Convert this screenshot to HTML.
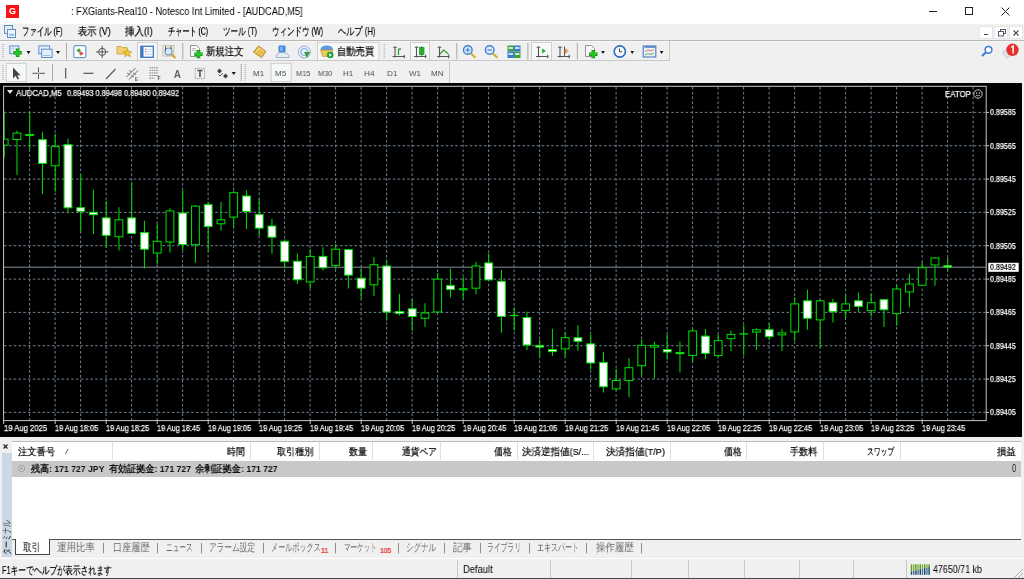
<!DOCTYPE html>
<html><head><meta charset="utf-8">
<style>
*{margin:0;padding:0;box-sizing:border-box}
html,body{width:1024px;height:579px;overflow:hidden;background:#f0f0f0;font-family:"Liberation Sans",sans-serif;color:#000}
.a{position:absolute;white-space:nowrap}
.t{transform-origin:0 50%;will-change:transform}
.ch{position:absolute;left:0;top:0}
.sep{position:absolute;width:1px;background:#e0e0e0}
</style></head><body>
<div class="a" style="left:0;top:0;width:1024px;height:23.5px;background:#fff"></div>
<div class="a" style="left:6px;top:5px;width:13px;height:12.5px;background:#f81414;color:#fff;font-size:9px;font-weight:bold;text-align:center;line-height:12.5px">G</div>
<div class="a" style="left:929px;top:11px;width:8px;height:1px;background:#222"></div>
<div class="a" style="left:965px;top:7px;width:8px;height:8px;border:1px solid #222"></div>
<svg class="a" style="left:1001px;top:6.5px" width="9" height="9"><path d="M0.5,0.5L8.5,8.5M8.5,0.5L0.5,8.5" stroke="#222" stroke-width="1"/></svg>

<svg class="a" style="left:4px;top:24.5px" width="12" height="13"><rect x="0.5" y="0.5" width="8" height="8" fill="#e6eef8" stroke="#5b8ecb"/><rect x="3.5" y="4.5" width="8" height="8" fill="#f2f6fb" stroke="#5b8ecb"/><path d="M5,8.5l1.3,2.5l1.3,-2.5l1.3,2.5l1.3,-2.5" stroke="#5b8ecb" fill="none" stroke-width="0.7"/></svg>
<div class="a" style="left:979px;top:25.5px;width:13.5px;height:13px;background:#fff;border:1px solid #e6e6e6"></div>
<div class="a" style="left:994px;top:25.5px;width:13.5px;height:13px;background:#fff;border:1px solid #e6e6e6"></div>
<div class="a" style="left:1009px;top:25.5px;width:13.5px;height:13px;background:#fff;border:1px solid #e6e6e6"></div>
<div class="a" style="left:983.5px;top:33.5px;width:4px;height:1.3px;background:#3c4a5a"></div>
<svg class="a" style="left:997.5px;top:28.5px" width="8" height="8"><rect x="2.5" y="0.5" width="5" height="4" fill="none" stroke="#3c4a5a" stroke-width="0.9"/><rect x="0.5" y="2.5" width="5" height="4.5" fill="#fff" stroke="#3c4a5a" stroke-width="0.9"/></svg>
<svg class="a" style="left:1013px;top:30px" width="6" height="6"><path d="M0.5,0.5L5.5,5.5M5.5,0.5L0.5,5.5" stroke="#3c4a5a" stroke-width="1.2"/></svg>
<div class="a" style="left:0;top:40px;width:1024px;height:1px;background:#b8b8b8"></div><div class="a" style="left:0;top:41px;width:1024px;height:1px;background:#f8f8f8"></div>

<div class="a" style="left:0;top:41px;width:670px;height:20px;border-right:1px solid #c8c8c8;border-bottom:1px solid #c8c8c8"></div>

<div class="a" style="left:0;top:62px;width:450px;height:21px;border-right:1px solid #c8c8c8"></div>
<svg class="a" style="left:0;top:40px;will-change:transform" width="1024" height="44" viewBox="0 40 1024 44">
<!-- gripper tb1 -->
<path d="M3,44V58.5M3,65V80.5M245.3,64V80.5M384.3,44V58.5" stroke="#b8b8b8" stroke-width="1.6" stroke-dasharray="1 1"/>
<!-- new chart -->
<rect x="9.8" y="45.9" width="9" height="7.8" fill="#e6eef8" stroke="#5d8fd0"/>
<path d="M11.5,48.2h3M11.5,50h1" stroke="#8fb0d8" stroke-width="0.8"/>
<path d="M17.6,48.5V57M13.4,52.7H21.8" stroke="#1a8a1a" stroke-width="3.6"/>
<path d="M17.6,49.2V56.3M14.1,52.7H21.1" stroke="#22cc22" stroke-width="2.2"/>
<path d="M26.5,51L30.5,51L28.5,54Z M56,51L60,51L58,54Z M601.2,51L604.8,51L603,54Z M630.5,51L634,51L632.2,54Z M659.8,51L663.4,51L661.6,54Z M231.7,72L235.8,72L233.7,75Z" fill="#111"/>
<!-- profiles -->
<rect x="38.8" y="45.9" width="10.8" height="7.8" fill="#e6eef8" stroke="#5d8fd0"/>
<rect x="41.6" y="49.2" width="10.5" height="8.3" fill="#e6eef8" stroke="#5d8fd0"/>
<path d="M43,55.5h7" stroke="#8fb0d8" stroke-width="0.8"/>
<!-- separators -->
<path d="M66.5,43V59.5M182.8,43V59.5M456.8,43V59.5M527.9,43V59.5M577.3,43V59.5M52.5,64V81M241.2,64V81" stroke="#a8a8a8" stroke-width="1"/>
<!-- market watch -->
<rect x="73.8" y="45.7" width="12" height="12" rx="1.5" fill="#fff" stroke="#6a9ad8" stroke-width="1.2"/>
<path d="M76.5,50.5l3,-2.5v1.5h1v2h-1v1.5z" fill="#2aa02a"/>
<path d="M83.5,53.5l-3,2.5v-1.5h-1v-2h1v-1.5z" fill="#e04040"/>
<!-- data window crosshair -->
<circle cx="102.2" cy="51.9" r="3.6" fill="none" stroke="#555" stroke-width="1"/>
<path d="M102.2,45.8V58M96,51.9H108.4" stroke="#555" stroke-width="1"/>
<!-- navigator -->
<path d="M117,46.5h4l1,1h5v6.5h-10z" fill="#f0d070" stroke="#c8a040" stroke-width="0.8"/>
<path d="M127.5,48.8l1.2,2.8l3,0.2l-2.3,2l0.8,3l-2.7,-1.7l-2.7,1.7l0.8,-3l-2.3,-2l3,-0.2z" fill="#f2c830" stroke="#b88a10" stroke-width="0.6"/>
<!-- terminal pressed -->
<rect x="137.4" y="42.3" width="19.8" height="18" fill="#f7f9f9" stroke="#c4c4c4" stroke-width="0.8"/>
<rect x="140.8" y="46.3" width="12.5" height="11" fill="#fff" stroke="#3c78c8" stroke-width="1.3"/>
<rect x="141" y="46.5" width="2.5" height="10.5" fill="#3c78c8"/>
<path d="M145,49.3h7M145,51.8h7M145,54.3h7" stroke="#b0c4e0" stroke-width="0.8"/>
<path d="M145,49.3h1M145,51.8h1" stroke="#e04040" stroke-width="1"/>
<!-- strategy tester -->
<rect x="162.8" y="45.5" width="11" height="10.5" fill="#f2f0e6" stroke="#c0b890" stroke-width="0.8"/>
<circle cx="168.5" cy="51.5" r="3.5" fill="#dbe8f8" stroke="#5a90d0" stroke-width="1.1"/>
<path d="M171,54L175.5,58" stroke="#d0a030" stroke-width="1.8"/>
<path d="M165.5,46v5M171,46v3" stroke="#444" stroke-width="0.8"/>
<!-- new order -->
<path d="M190.5,45.5h6l3,3v8h-9z" fill="#fafafa" stroke="#888" stroke-width="0.9"/>
<path d="M192,48.5h4M192,50.5h5" stroke="#999" stroke-width="0.7"/>
<path d="M198.5,50V58.2M194.3,54.2H202.6" stroke="#1a8a1a" stroke-width="3.6"/>
<path d="M198.5,50.7V57.5M195,54.2H201.9" stroke="#22cc22" stroke-width="2.2"/>
<!-- metaeditor gold -->
<path d="M253.5,52l5,-6l7.5,5.5l-4.5,6z" fill="#e8c050" stroke="#b07a20" stroke-width="0.9"/>
<path d="M255.5,52.5l4,-4.5l4.5,3.5" stroke="#f8e090" stroke-width="1" fill="none"/>
<!-- person -->
<rect x="278.5" y="45.5" width="7" height="7" rx="1" fill="#3a8ae0"/>
<path d="M280,48h3M280,50h3" stroke="#fff" stroke-width="0.7"/>
<path d="M276,57.5q0,-5 6.5,-5q6.5,0 6.5,5z" fill="#e6eef6" stroke="#8aa0b8" stroke-width="0.8"/>
<!-- signals circle -->
<circle cx="304.3" cy="52" r="6" fill="#e8f0f8" stroke="#8ab0d8" stroke-width="1"/>
<circle cx="304.3" cy="52" r="3.5" fill="none" stroke="#6a9ad0" stroke-width="0.9"/>
<path d="M304,52l3,6l3,-6" fill="#3aa040"/>
<!-- autotrading pressed -->
<rect x="317.5" y="42.3" width="61.5" height="18" fill="#f7f9f9" stroke="#c4c4c4" stroke-width="0.8"/>
<path d="M320.5,50q0,-4.5 6.5,-4.5q6,0 6,4.5z" fill="#5a9ae0"/>
<path d="M320.5,50h12.5l-2,6.5h-8.5z" fill="#e8c858" stroke="#b89030" stroke-width="0.6"/>
<circle cx="330.2" cy="55" r="3.3" fill="#1fa03a"/>
<path d="M329.2,53.3v3.4l2.6,-1.7z" fill="#fff"/>
<!-- bar chart -->
<path d="M395,46.5V57.5M393.2,47.3H396.8M392.5,56.5H405M404.2,54.8V58.2" stroke="#555" stroke-width="1.1"/>
<path d="M398.5,49v6M398.5,49h2.5" stroke="#2aa030" stroke-width="1.3"/>
<!-- candle pressed -->
<rect x="410.6" y="42.3" width="19" height="18" fill="#f7f9f9" stroke="#c4c4c4" stroke-width="0.8"/>
<path d="M416.5,46.5V57.5M414.7,47.3H418.3M414.0,56.5H426.5M425.7,54.8V58.2" stroke="#555" stroke-width="1.1"/>
<rect x="419.5" y="47.5" width="4.5" height="7" fill="#2ac030" stroke="#158a20" stroke-width="0.7"/>
<path d="M421.7,46v10" stroke="#158a20" stroke-width="0.8"/>
<!-- line chart -->
<path d="M439.5,46.5V57.5M437.7,47.3H441.3M437.0,56.5H449.5M448.7,54.8V58.2" stroke="#555" stroke-width="1.1"/>
<path d="M440,54l3.5,-4l5,4" stroke="#30a030" stroke-width="1.2" fill="none"/>
<!-- zoom in/out -->
<circle cx="467.8" cy="50" r="4.3" fill="#e0ecfa" stroke="#3a80d8" stroke-width="1.4"/>
<path d="M465.5,50h4.6M467.8,47.7v4.6" stroke="#3a80d8" stroke-width="1.2"/>
<path d="M471,53.5L475.5,57.8" stroke="#d8a830" stroke-width="2"/>
<circle cx="489.7" cy="50" r="4.3" fill="#e0ecfa" stroke="#3a80d8" stroke-width="1.4"/>
<path d="M487.4,50h4.6" stroke="#3a80d8" stroke-width="1.2"/>
<path d="M492.9,53.5L497.4,57.8" stroke="#d8a830" stroke-width="2"/>
<!-- tile -->
<rect x="507.5" y="45.5" width="6.5" height="6" fill="#3aa040"/>
<rect x="514" y="45.5" width="6.5" height="6" fill="#3a7ad0"/>
<rect x="507.5" y="51.5" width="6.5" height="6.5" fill="#3a7ad0"/>
<rect x="514" y="51.5" width="6.5" height="6.5" fill="#3aa040"/>
<path d="M508.5,48h4.5M515,48h4.5M508.5,54h4.5M515,54h4.5" stroke="#fff" stroke-width="1.4"/>
<!-- chart shift pressed -->
<rect x="531.6" y="42.3" width="19.8" height="18" fill="#f7f9f9" stroke="#c4c4c4" stroke-width="0.8"/>
<path d="M538.5,46.5V57.5M536.7,47.3H540.3M536.0,56.5H548.5M547.7,54.8V58.2" stroke="#555" stroke-width="1.1"/>
<path d="M542,48.5v5l4,-2.5z" fill="#2ab030"/>
<!-- autoscroll -->
<path d="M560,46.5V57.5M558.2,47.3H561.8M557.5,56.5H570M569.2,54.8V58.2" stroke="#555" stroke-width="1.1"/><path d="M564.5,46.5V57" stroke="#555" stroke-width="1"/>
<path d="M568.5,51h-3.5M566.5,49l-2,2l2,2" stroke="#e07020" stroke-width="1.1" fill="none"/>
<!-- indicators -->
<path d="M585.5,45.5h6l3,3v8h-9z" fill="#fafafa" stroke="#888" stroke-width="0.9"/>
<path d="M593.3,50V58.2M589.1,54.2H597.5" stroke="#1a8a1a" stroke-width="3.6"/>
<path d="M593.3,50.7V57.5M589.8,54.2H596.8" stroke="#22cc22" stroke-width="2.2"/>
<!-- clock -->
<circle cx="619.8" cy="51.5" r="5.6" fill="#f4f8fc" stroke="#2a6ac8" stroke-width="1.6"/>
<path d="M619.5,48.5v3.3h2.5" stroke="#333" stroke-width="0.9" fill="none"/>
<!-- templates -->
<rect x="643.2" y="46" width="12.6" height="11" fill="#e8f0f8" stroke="#4a7ac0" stroke-width="1.1"/>
<path d="M644.5,47h10.5" stroke="#4a7ac0" stroke-width="1.5"/>
<path d="M645,51.5l3,-1.5l3,1l3,-1.5" stroke="#e06030" stroke-width="0.8" fill="none"/>
<path d="M645,55l3,-1.5l3,1l3,-1.5" stroke="#40a040" stroke-width="0.8" fill="none"/>
<!-- search & notification -->
<circle cx="988.5" cy="49.8" r="3.4" fill="#fff" stroke="#3a7bd5" stroke-width="1.5"/>
<path d="M986,52.3L982,56" stroke="#3a7bd5" stroke-width="2"/>
<path d="M1003,51.5q5,-3 10,0q1,4 -4,5l-3,2l0.5,-2q-4,-1 -3.5,-5z" fill="#e0e4e8" stroke="#b0b8c0" stroke-width="0.6"/>
<circle cx="1012.5" cy="49.8" r="6.2" fill="#e8302a"/>
<path d="M1011.3,47.3l1.8,-1.3v7.5" stroke="#fff" stroke-width="1.5" fill="none"/>
<!-- toolbar 2 -->
<rect x="6.2" y="63.3" width="20" height="18.4" fill="#f5f8f8" stroke="#c4c4c4" stroke-width="0.8"/>
<path d="M13,67.5v11l2.6,-2.7l2,3.8l1.5,-0.8l-1.9,-3.6h3.3z" fill="#444"/>
<path d="M38.5,67.5v5M38.5,73.8v5.2M32.5,73.3H37.8M39.2,73.3H45" stroke="#555" stroke-width="1"/>
<path d="M65.7,68v10.5" stroke="#555" stroke-width="1.2"/>
<path d="M83.5,73.3h10" stroke="#555" stroke-width="1.2"/>
<path d="M106,79L115.5,69" stroke="#555" stroke-width="1.1"/>
<path d="M126.5,77l9,-9M129,79.5l9,-9" stroke="#555" stroke-width="0.9"/><path d="M127,73l3,1.5M129,70.5l3,1.5M131,75.5l3,1.5M133,73l3,1.5" stroke="#666" stroke-width="0.8"/>
<text x="135" y="80.5" font-size="4.5" font-weight="bold" fill="#555" font-family="Liberation Sans">E</text>
<path d="M149.5,67.7h9M149.5,70.3h9M149.5,72.9h9M149.5,75.5h9M149.5,78.1h5" stroke="#666" stroke-width="0.8" stroke-dasharray="1.5 0.7"/>
<text x="157.5" y="80" font-size="5" font-weight="bold" fill="#555" font-family="Liberation Sans">F</text>
<text x="173.8" y="77.8" font-size="10" font-weight="bold" fill="#666" font-family="Liberation Sans">A</text>
<rect x="195.2" y="68.3" width="9.4" height="10.3" fill="none" stroke="#777" stroke-width="0.8" stroke-dasharray="1 1"/>
<path d="M197.3,70.5h5.3M199.95,70.5v6.5" stroke="#555" stroke-width="1.6"/>
<path d="M217,71l2.5,-2.5l2.5,2.5l-2.5,2.5z M223,76l2.5,-2.5l2.5,2.5l-2.5,2.5z" fill="#444"/>
<path d="M218.5,74.5l1.5,1.5l3,-3" stroke="#444" stroke-width="0.9" fill="none"/>
<!-- M5 pressed -->
<rect x="271.1" y="63.3" width="20" height="18.4" fill="#f5f8f8" stroke="#c4c4c4" stroke-width="0.8"/>
</svg>


<div class="a" style="left:0;top:83px;width:1022px;height:354px;background:#000"></div>
<svg class="ch" width="1024" height="579" viewBox="0 0 1024 579"><defs><clipPath id="cc"><rect x="4" y="87" width="982" height="333"/></clipPath></defs><rect x="3.6" y="86.3" width="982.6" height="334.3" fill="none" stroke="#c8c8c8" stroke-width="1"/><path d="M4,112.4H986 M4,145.7H986 M4,179.1H986 M4,212.4H986 M4,245.7H986 M4,279.1H986 M4,312.4H986 M4,345.7H986 M4,379.1H986 M4,412.4H986 M29.6,87V420 M55.1,87V420 M80.6,87V420 M106.1,87V420 M131.6,87V420 M157.1,87V420 M182.6,87V420 M208.1,87V420 M233.6,87V420 M259.1,87V420 M284.6,87V420 M310.1,87V420 M335.6,87V420 M361.1,87V420 M386.6,87V420 M412.1,87V420 M437.6,87V420 M463.1,87V420 M488.6,87V420 M514.1,87V420 M539.6,87V420 M565.1,87V420 M590.6,87V420 M616.1,87V420 M641.6,87V420 M667.1,87V420 M692.6,87V420 M718.1,87V420 M743.6,87V420 M769.1,87V420 M794.6,87V420 M820.1,87V420 M845.6,87V420 M871.1,87V420 M896.6,87V420 M922.1,87V420 M947.6,87V420 M973.1,87V420" stroke="#6f8090" stroke-width="1" stroke-dasharray="2.6 2.2" fill="none"/><path d="M4,267.2H986" stroke="#8090a0" stroke-width="1"/><g clip-path="url(#cc)"><path d="M4.20,111.6V157.4 M16.95,130.4V175.1 M29.70,111.6V149.7 M42.45,131.8V193.9 M55.20,133.7V191.7 M67.95,138.7V213.2 M80.70,174.6V231.2 M93.45,189.8V233.9 M106.20,200.8V247.7 M118.95,207.2V250.5 M131.70,182.3V233.1 M144.45,220.7V268.4 M157.20,223.8V264.2 M169.95,208.3V252.4 M182.70,190.3V250.3 M195.45,205.2V262.8 M208.20,202.1V251.8 M220.95,202.1V230.5 M233.70,190.7V227.6 M246.45,190.3V229.0 M259.20,199.0V236.3 M271.95,219.0V253.8 M284.70,239.3V268.3 M297.45,253.4V283.9 M310.20,249.3V288.6 M322.95,247.2V270.4 M335.70,243.9V269.4 M348.45,248.7V288.6 M361.20,268.3V299.0 M373.95,257.0V295.9 M386.70,259.7V320.8 M399.45,293.8V315.6 M412.20,299.0V331.1 M424.95,303.2V327.0 M437.70,273.1V312.5 M450.45,268.6V297.6 M463.20,277.3V299.0 M475.95,261.7V294.3 M488.70,253.5V280.4 M501.45,270.0V332.8 M514.20,307.6V330.4 M526.95,311.7V350.0 M539.70,339.7V357.3 M552.45,328.7V355.9 M565.20,332.5V357.3 M577.95,325.2V351.1 M590.70,334.5V369.7 M603.45,352.1V392.5 M616.20,368.7V390.4 M628.95,358.3V397.3 M641.70,339.7V374.9 M654.45,341.8V378.6 M667.20,334.5V359.4 M679.95,341.8V372.4 M692.70,328.9V362.1 M705.45,328.9V359.0 M718.20,334.5V357.3 M730.95,330.4V351.1 M743.70,325.2V355.2 M756.45,328.3V350.0 M769.20,323.3V340.0 M781.95,328.7V351.1 M794.70,297.2V341.1 M807.45,289.8V329.7 M820.20,299.7V347.7 M832.95,298.7V322.5 M845.70,295.1V317.9 M858.45,292.5V311.7 M871.20,293.5V316.7 M883.95,298.7V327.0 M896.70,285.1V325.8 M909.45,273.7V307.2 M922.20,262.1V285.7 M934.95,257.4V285.7 M947.70,257.4V270.2" stroke="#00d000" stroke-width="1.1"/><rect x="0.30" y="139.2" width="7.8" height="5.9" fill="#000000" stroke="#00e000" stroke-width="1"/><rect x="13.05" y="133.1" width="7.8" height="6.4" fill="#000000" stroke="#00e000" stroke-width="1"/><rect x="25.80" y="134.5" width="7.8" height="0.9" fill="#ffffff" stroke="#00e000" stroke-width="1"/><rect x="38.55" y="139.7" width="7.8" height="23.8" fill="#ffffff" stroke="#00e000" stroke-width="1"/><rect x="51.30" y="146.6" width="7.8" height="19.2" fill="#000000" stroke="#00e000" stroke-width="1"/><rect x="64.05" y="144.7" width="7.8" height="63.1" fill="#ffffff" stroke="#00e000" stroke-width="1"/><rect x="76.80" y="207.7" width="7.8" height="3.6" fill="#ffffff" stroke="#00e000" stroke-width="1"/><rect x="89.55" y="212.3" width="7.8" height="2.4" fill="#ffffff" stroke="#00e000" stroke-width="1"/><rect x="102.30" y="217.9" width="7.8" height="17.5" fill="#ffffff" stroke="#00e000" stroke-width="1"/><rect x="115.05" y="219.8" width="7.8" height="17.0" fill="#000000" stroke="#00e000" stroke-width="1"/><rect x="127.80" y="217.9" width="7.8" height="15.5" fill="#ffffff" stroke="#00e000" stroke-width="1"/><rect x="140.55" y="232.6" width="7.8" height="16.6" fill="#ffffff" stroke="#00e000" stroke-width="1"/><rect x="153.30" y="241.3" width="7.8" height="11.7" fill="#000000" stroke="#00e000" stroke-width="1"/><rect x="166.05" y="210.9" width="7.8" height="31.1" fill="#000000" stroke="#00e000" stroke-width="1"/><rect x="178.80" y="213.0" width="7.8" height="31.5" fill="#ffffff" stroke="#00e000" stroke-width="1"/><rect x="191.55" y="206.1" width="7.8" height="38.6" fill="#000000" stroke="#00e000" stroke-width="1"/><rect x="204.30" y="204.7" width="7.8" height="21.8" fill="#ffffff" stroke="#00e000" stroke-width="1"/><rect x="217.05" y="219.8" width="7.8" height="4.0" fill="#000000" stroke="#00e000" stroke-width="1"/><rect x="229.80" y="192.7" width="7.8" height="24.4" fill="#000000" stroke="#00e000" stroke-width="1"/><rect x="242.55" y="196.0" width="7.8" height="15.5" fill="#ffffff" stroke="#00e000" stroke-width="1"/><rect x="255.30" y="214.4" width="7.8" height="13.7" fill="#ffffff" stroke="#00e000" stroke-width="1"/><rect x="268.05" y="226.0" width="7.8" height="11.2" fill="#ffffff" stroke="#00e000" stroke-width="1"/><rect x="280.80" y="241.3" width="7.8" height="20.3" fill="#ffffff" stroke="#00e000" stroke-width="1"/><rect x="293.55" y="261.2" width="7.8" height="18.6" fill="#ffffff" stroke="#00e000" stroke-width="1"/><rect x="306.30" y="256.4" width="7.8" height="25.5" fill="#000000" stroke="#00e000" stroke-width="1"/><rect x="319.05" y="256.4" width="7.8" height="11.4" fill="#ffffff" stroke="#00e000" stroke-width="1"/><rect x="331.80" y="249.2" width="7.8" height="16.2" fill="#000000" stroke="#00e000" stroke-width="1"/><rect x="344.55" y="249.6" width="7.8" height="25.5" fill="#ffffff" stroke="#00e000" stroke-width="1"/><rect x="357.30" y="278.2" width="7.8" height="9.9" fill="#ffffff" stroke="#00e000" stroke-width="1"/><rect x="370.05" y="264.7" width="7.8" height="20.1" fill="#000000" stroke="#00e000" stroke-width="1"/><rect x="382.80" y="266.0" width="7.8" height="46.0" fill="#ffffff" stroke="#00e000" stroke-width="1"/><rect x="395.55" y="311.5" width="7.8" height="1.9" fill="#ffffff" stroke="#00e000" stroke-width="1"/><rect x="408.30" y="308.8" width="7.8" height="7.7" fill="#ffffff" stroke="#00e000" stroke-width="1"/><rect x="421.05" y="313.0" width="7.8" height="5.2" fill="#000000" stroke="#00e000" stroke-width="1"/><rect x="433.80" y="279.2" width="7.8" height="32.8" fill="#000000" stroke="#00e000" stroke-width="1"/><rect x="446.55" y="285.6" width="7.8" height="4.0" fill="#ffffff" stroke="#00e000" stroke-width="1"/><rect x="459.30" y="288.7" width="7.8" height="1.1" fill="#000000" stroke="#00e000" stroke-width="1"/><rect x="472.05" y="266.0" width="7.8" height="22.2" fill="#000000" stroke="#00e000" stroke-width="1"/><rect x="484.80" y="262.9" width="7.8" height="17.0" fill="#ffffff" stroke="#00e000" stroke-width="1"/><rect x="497.55" y="281.3" width="7.8" height="35.2" fill="#ffffff" stroke="#00e000" stroke-width="1"/><path d="M509.80,315.5H518.60" stroke="#00e000" stroke-width="1.3"/><rect x="523.05" y="317.5" width="7.8" height="27.5" fill="#ffffff" stroke="#00e000" stroke-width="1"/><rect x="535.80" y="345.4" width="7.8" height="1.7" fill="#ffffff" stroke="#00e000" stroke-width="1"/><rect x="548.55" y="349.5" width="7.8" height="2.1" fill="#ffffff" stroke="#00e000" stroke-width="1"/><rect x="561.30" y="337.7" width="7.8" height="11.2" fill="#000000" stroke="#00e000" stroke-width="1"/><rect x="574.05" y="337.7" width="7.8" height="3.6" fill="#ffffff" stroke="#00e000" stroke-width="1"/><rect x="586.80" y="343.9" width="7.8" height="19.1" fill="#ffffff" stroke="#00e000" stroke-width="1"/><rect x="599.55" y="362.4" width="7.8" height="24.4" fill="#ffffff" stroke="#00e000" stroke-width="1"/><rect x="612.30" y="380.5" width="7.8" height="8.4" fill="#000000" stroke="#00e000" stroke-width="1"/><rect x="625.05" y="367.7" width="7.8" height="12.9" fill="#000000" stroke="#00e000" stroke-width="1"/><rect x="637.80" y="345.4" width="7.8" height="20.3" fill="#000000" stroke="#00e000" stroke-width="1"/><rect x="650.55" y="345.4" width="7.8" height="1.7" fill="#000000" stroke="#00e000" stroke-width="1"/><rect x="663.30" y="349.5" width="7.8" height="2.5" fill="#ffffff" stroke="#00e000" stroke-width="1"/><rect x="676.05" y="352.6" width="7.8" height="1.1" fill="#ffffff" stroke="#00e000" stroke-width="1"/><rect x="688.80" y="330.9" width="7.8" height="24.5" fill="#000000" stroke="#00e000" stroke-width="1"/><rect x="701.55" y="336.1" width="7.8" height="17.2" fill="#ffffff" stroke="#00e000" stroke-width="1"/><rect x="714.30" y="340.6" width="7.8" height="14.8" fill="#000000" stroke="#00e000" stroke-width="1"/><rect x="727.05" y="334.4" width="7.8" height="4.2" fill="#000000" stroke="#00e000" stroke-width="1"/><path d="M739.30,333.9H748.10" stroke="#00e000" stroke-width="1.3"/><rect x="752.55" y="329.8" width="7.8" height="2.2" fill="#000000" stroke="#00e000" stroke-width="1"/><rect x="765.30" y="329.7" width="7.8" height="6.9" fill="#ffffff" stroke="#00e000" stroke-width="1"/><rect x="778.05" y="332.9" width="7.8" height="1.9" fill="#000000" stroke="#00e000" stroke-width="1"/><rect x="790.80" y="303.9" width="7.8" height="28.0" fill="#000000" stroke="#00e000" stroke-width="1"/><rect x="803.55" y="300.8" width="7.8" height="17.5" fill="#ffffff" stroke="#00e000" stroke-width="1"/><rect x="816.30" y="300.8" width="7.8" height="19.1" fill="#000000" stroke="#00e000" stroke-width="1"/><rect x="829.05" y="302.7" width="7.8" height="8.9" fill="#ffffff" stroke="#00e000" stroke-width="1"/><rect x="841.80" y="303.9" width="7.8" height="6.7" fill="#000000" stroke="#00e000" stroke-width="1"/><rect x="854.55" y="300.8" width="7.8" height="5.6" fill="#ffffff" stroke="#00e000" stroke-width="1"/><rect x="867.30" y="302.7" width="7.8" height="7.9" fill="#000000" stroke="#00e000" stroke-width="1"/><rect x="880.05" y="299.6" width="7.8" height="10.2" fill="#ffffff" stroke="#00e000" stroke-width="1"/><rect x="892.80" y="289.0" width="7.8" height="24.6" fill="#000000" stroke="#00e000" stroke-width="1"/><rect x="905.55" y="284.0" width="7.8" height="7.9" fill="#000000" stroke="#00e000" stroke-width="1"/><rect x="918.30" y="267.7" width="7.8" height="17.5" fill="#000000" stroke="#00e000" stroke-width="1"/><rect x="931.05" y="257.9" width="7.8" height="7.1" fill="#000000" stroke="#00e000" stroke-width="1"/><rect x="943.80" y="265.7" width="7.8" height="1.4" fill="#ffffff" stroke="#00e000" stroke-width="1"/></g><path d="M986,112.4H989" stroke="#c8c8c8"/><path d="M986,145.7H989" stroke="#c8c8c8"/><path d="M986,179.1H989" stroke="#c8c8c8"/><path d="M986,212.4H989" stroke="#c8c8c8"/><path d="M986,245.7H989" stroke="#c8c8c8"/><path d="M986,279.1H989" stroke="#c8c8c8"/><path d="M986,312.4H989" stroke="#c8c8c8"/><path d="M986,345.7H989" stroke="#c8c8c8"/><path d="M986,379.1H989" stroke="#c8c8c8"/><path d="M986,412.4H989" stroke="#c8c8c8"/><rect x="988.3" y="262.8" width="30.4" height="9" fill="#ffffff"/><path d="M3.6,420.5V424" stroke="#c8c8c8"/><path d="M55.2,420.5V424" stroke="#c8c8c8"/><path d="M106.2,420.5V424" stroke="#c8c8c8"/><path d="M157.2,420.5V424" stroke="#c8c8c8"/><path d="M208.2,420.5V424" stroke="#c8c8c8"/><path d="M259.2,420.5V424" stroke="#c8c8c8"/><path d="M310.2,420.5V424" stroke="#c8c8c8"/><path d="M361.2,420.5V424" stroke="#c8c8c8"/><path d="M412.2,420.5V424" stroke="#c8c8c8"/><path d="M463.2,420.5V424" stroke="#c8c8c8"/><path d="M514.2,420.5V424" stroke="#c8c8c8"/><path d="M565.2,420.5V424" stroke="#c8c8c8"/><path d="M616.2,420.5V424" stroke="#c8c8c8"/><path d="M667.2,420.5V424" stroke="#c8c8c8"/><path d="M718.2,420.5V424" stroke="#c8c8c8"/><path d="M769.2,420.5V424" stroke="#c8c8c8"/><path d="M820.2,420.5V424" stroke="#c8c8c8"/><path d="M871.2,420.5V424" stroke="#c8c8c8"/><path d="M922.2,420.5V424" stroke="#c8c8c8"/></svg>
<div class="a" style="left:7px;top:90px;width:0;height:0;border-left:3px solid transparent;border-right:3px solid transparent;border-top:4px solid #e8e8e8"></div>
<svg class="a" style="left:973px;top:89px" width="10" height="10"><circle cx="5" cy="5" r="4.2" fill="none" stroke="#ddd" stroke-width="0.9"/><circle cx="3.6" cy="4" r="0.7" fill="#ddd"/><circle cx="6.4" cy="4" r="0.7" fill="#ddd"/><path d="M3,6Q5,8 7,6" stroke="#ddd" fill="none" stroke-width="0.8"/></svg>

<div class="a" style="left:0;top:437px;width:1024px;height:4px;background:#f0f0f0"></div>
<svg class="a" style="left:3px;top:443.5px" width="5" height="5"><path d="M0.5,0.5L4.5,4.5M4.5,0.5L0.5,4.5" stroke="#222" stroke-width="1.2"/></svg>
<div class="a" style="left:1.5px;top:453px;width:10px;height:103.5px;background:#cbd8e6"></div>
<div class="a" style="left:1.5px;top:555px;font-size:9.5px;line-height:10px;color:#222;transform:rotate(-90deg) scaleX(0.7);transform-origin:0 0;will-change:transform">ターミナル</div>
<div class="a" style="left:12px;top:441px;width:1009px;height:98px;background:#fff;border-top:1px solid #bcbcbc"></div>
<div class="a" style="left:12px;top:461px;width:1009px;height:15.5px;background:#c8c8c8"></div>
<div class="sep" style="left:112px;top:442px;height:18px"></div>
<div class="sep" style="left:250px;top:442px;height:18px"></div>
<div class="sep" style="left:319px;top:442px;height:18px"></div>
<div class="sep" style="left:372px;top:442px;height:18px"></div>
<div class="sep" style="left:440px;top:442px;height:18px"></div>
<div class="sep" style="left:517px;top:442px;height:18px"></div>
<div class="sep" style="left:593px;top:442px;height:18px"></div>
<div class="sep" style="left:670px;top:442px;height:18px"></div>
<div class="sep" style="left:746px;top:442px;height:18px"></div>
<div class="sep" style="left:823px;top:442px;height:18px"></div>
<div class="sep" style="left:900px;top:442px;height:18px"></div>
<svg class="a" style="left:18px;top:465px" width="7" height="7"><circle cx="3.5" cy="3.5" r="3" fill="#d8d8d8" stroke="#888" stroke-width="0.8"/><circle cx="3.5" cy="3.5" r="1.2" fill="#999"/></svg>

<div class="a" style="left:12px;top:539px;width:1009px;height:1px;background:#555"></div>
<div class="a" style="left:14.5px;top:539px;width:35px;height:16px;background:#fff;border:1px solid #444;border-top:none"></div>

<div class="a" style="left:0;top:558px;width:1024px;height:1px;background:#fff"></div>
<div class="sep" style="left:457px;top:560px;height:18px;background:#c8c8c8"></div>
<div class="sep" style="left:550px;top:560px;height:18px;background:#c8c8c8"></div>
<div class="sep" style="left:631px;top:560px;height:18px;background:#c8c8c8"></div>
<div class="sep" style="left:688px;top:560px;height:18px;background:#c8c8c8"></div>
<div class="sep" style="left:744px;top:560px;height:18px;background:#c8c8c8"></div>
<div class="sep" style="left:799px;top:560px;height:18px;background:#c8c8c8"></div>
<div class="sep" style="left:853px;top:560px;height:18px;background:#c8c8c8"></div>
<div class="sep" style="left:906px;top:560px;height:18px;background:#c8c8c8"></div>
<svg class="a" style="left:910px;top:564px" width="20" height="11"><rect x="0.80" y="0.3" width="1.4" height="7.20" fill="#5a9a1a"/><rect x="0.80" y="7.50" width="1.4" height="3.30" fill="#0a4a6a"/><rect x="3.00" y="0.3" width="1.4" height="6.65" fill="#7ab040"/><rect x="3.00" y="6.95" width="1.4" height="3.85" fill="#4a7090"/><rect x="5.20" y="0.3" width="1.4" height="6.10" fill="#5a9a1a"/><rect x="5.20" y="6.40" width="1.4" height="4.40" fill="#0a4a6a"/><rect x="7.40" y="0.3" width="1.4" height="5.55" fill="#7ab040"/><rect x="7.40" y="5.85" width="1.4" height="4.95" fill="#4a7090"/><rect x="9.60" y="0.3" width="1.4" height="5.00" fill="#5a9a1a"/><rect x="9.60" y="5.30" width="1.4" height="5.50" fill="#0a4a6a"/><rect x="11.80" y="0.3" width="1.4" height="4.45" fill="#7ab040"/><rect x="11.80" y="4.75" width="1.4" height="6.05" fill="#4a7090"/><rect x="14.00" y="0.3" width="1.4" height="3.90" fill="#5a9a1a"/><rect x="14.00" y="4.20" width="1.4" height="6.60" fill="#0a4a6a"/><rect x="16.20" y="0.3" width="1.4" height="3.35" fill="#7ab040"/><rect x="16.20" y="3.65" width="1.4" height="7.15" fill="#4a7090"/><rect x="18.40" y="0.3" width="1.4" height="2.80" fill="#5a9a1a"/><rect x="18.40" y="3.10" width="1.4" height="7.70" fill="#0a4a6a"/></svg><svg class="a" style="left:1010px;top:566px" width="14" height="13"><path d="M13,3L3,13M13,7L7,13M13,11L11,13" stroke="#b0b0b0" stroke-width="1"/></svg>
<div class="a" style="left:0;top:578px;width:1024px;height:1px;background:#3a4a5a"></div>
<div class="a t" style="left:71.0px;top:6.7px;font-size:10px;line-height:10px;color:#000;transform:scaleX(0.926)">: FXGiants-Real10 - Notesco Int Limited - [AUDCAD,M5]</div>
<div class="a t" style="left:22.0px;top:26.3px;font-size:10.5px;line-height:10.5px;color:#000;transform:scaleX(0.671);-webkit-text-stroke:0.2px #000">ファイル (F)</div>
<div class="a t" style="left:77.5px;top:26.3px;font-size:10.5px;line-height:10.5px;color:#000;transform:scaleX(0.835);-webkit-text-stroke:0.2px #000">表示 (V)</div>
<div class="a t" style="left:125.0px;top:26.3px;font-size:10.5px;line-height:10.5px;color:#000;transform:scaleX(0.861);-webkit-text-stroke:0.2px #000">挿入(I)</div>
<div class="a t" style="left:167.5px;top:26.3px;font-size:10.5px;line-height:10.5px;color:#000;transform:scaleX(0.650);-webkit-text-stroke:0.2px #000">チャート (C)</div>
<div class="a t" style="left:222.5px;top:26.3px;font-size:10.5px;line-height:10.5px;color:#000;transform:scaleX(0.689);-webkit-text-stroke:0.2px #000">ツール (T)</div>
<div class="a t" style="left:271.5px;top:26.3px;font-size:10.5px;line-height:10.5px;color:#000;transform:scaleX(0.682);-webkit-text-stroke:0.2px #000">ウィンドウ (W)</div>
<div class="a t" style="left:337.5px;top:26.3px;font-size:10.5px;line-height:10.5px;color:#000;transform:scaleX(0.743);-webkit-text-stroke:0.2px #000">ヘルプ (H)</div>
<div class="a t" style="left:206.0px;top:45.6px;font-size:10.5px;line-height:10.5px;color:#000;transform:scaleX(0.852);-webkit-text-stroke:0.2px #000">新規注文</div>
<div class="a t" style="left:337.2px;top:45.6px;font-size:10.5px;line-height:10.5px;color:#000;transform:scaleX(0.843);-webkit-text-stroke:0.2px #000">自動売買</div>
<div class="a t" style="left:252.5px;top:70.0px;font-size:8px;line-height:8px;color:#505050;transform:scaleX(0.989)">M1</div>
<div class="a t" style="left:275.0px;top:70.0px;font-size:8px;line-height:8px;color:#505050;transform:scaleX(0.989)">M5</div>
<div class="a t" style="left:295.8px;top:70.0px;font-size:8px;line-height:8px;color:#505050;transform:scaleX(0.925)">M15</div>
<div class="a t" style="left:318.3px;top:70.0px;font-size:8px;line-height:8px;color:#505050;transform:scaleX(0.925)">M30</div>
<div class="a t" style="left:342.5px;top:70.0px;font-size:8px;line-height:8px;color:#505050;transform:scaleX(0.977)">H1</div>
<div class="a t" style="left:364.1px;top:70.0px;font-size:8px;line-height:8px;color:#505050;transform:scaleX(1.026)">H4</div>
<div class="a t" style="left:386.9px;top:70.0px;font-size:8px;line-height:8px;color:#505050;transform:scaleX(1.026)">D1</div>
<div class="a t" style="left:409.3px;top:70.0px;font-size:8px;line-height:8px;color:#505050;transform:scaleX(1.000)">W1</div>
<div class="a t" style="left:430.6px;top:70.0px;font-size:8px;line-height:8px;color:#505050;transform:scaleX(0.964)">MN</div>
<div class="a t" style="left:16.0px;top:88.6px;font-size:8.5px;line-height:8.5px;color:#f4f4f4;transform:scaleX(0.913);-webkit-text-stroke:0.25px #f4f4f4">AUDCAD,M5</div>
<div class="a t" style="left:66.8px;top:88.6px;font-size:8.5px;line-height:8.5px;color:#f4f4f4;transform:scaleX(0.862);-webkit-text-stroke:0.25px #f4f4f4">0.89493 0.89498 0.89490 0.89492</div>
<div class="a t" style="left:944.7px;top:89.6px;font-size:8.5px;line-height:8.5px;color:#f4f4f4;transform:scaleX(0.924);-webkit-text-stroke:0.25px #f4f4f4">EATOP</div>
<div class="a t" style="left:990.3px;top:108.4px;font-size:8.8px;line-height:8.8px;color:#fafafa;transform:scaleX(0.808);-webkit-text-stroke:0.25px #fafafa">0.89585</div>
<div class="a t" style="left:990.3px;top:141.7px;font-size:8.8px;line-height:8.8px;color:#fafafa;transform:scaleX(0.808);-webkit-text-stroke:0.25px #fafafa">0.89565</div>
<div class="a t" style="left:990.3px;top:175.1px;font-size:8.8px;line-height:8.8px;color:#fafafa;transform:scaleX(0.808);-webkit-text-stroke:0.25px #fafafa">0.89545</div>
<div class="a t" style="left:990.3px;top:208.4px;font-size:8.8px;line-height:8.8px;color:#fafafa;transform:scaleX(0.808);-webkit-text-stroke:0.25px #fafafa">0.89525</div>
<div class="a t" style="left:990.3px;top:241.7px;font-size:8.8px;line-height:8.8px;color:#fafafa;transform:scaleX(0.808);-webkit-text-stroke:0.25px #fafafa">0.89505</div>
<div class="a t" style="left:990.3px;top:275.1px;font-size:8.8px;line-height:8.8px;color:#fafafa;transform:scaleX(0.808);-webkit-text-stroke:0.25px #fafafa">0.89485</div>
<div class="a t" style="left:990.3px;top:308.4px;font-size:8.8px;line-height:8.8px;color:#fafafa;transform:scaleX(0.808);-webkit-text-stroke:0.25px #fafafa">0.89465</div>
<div class="a t" style="left:990.3px;top:341.7px;font-size:8.8px;line-height:8.8px;color:#fafafa;transform:scaleX(0.808);-webkit-text-stroke:0.25px #fafafa">0.89445</div>
<div class="a t" style="left:990.3px;top:375.1px;font-size:8.8px;line-height:8.8px;color:#fafafa;transform:scaleX(0.808);-webkit-text-stroke:0.25px #fafafa">0.89425</div>
<div class="a t" style="left:990.3px;top:408.4px;font-size:8.8px;line-height:8.8px;color:#fafafa;transform:scaleX(0.808);-webkit-text-stroke:0.25px #fafafa">0.89405</div>
<div class="a t" style="left:990.3px;top:262.7px;font-size:8.8px;line-height:8.8px;color:#000;transform:scaleX(0.808);-webkit-text-stroke:0.2px #000">0.89492</div>
<div class="a t" style="left:4.0px;top:423.9px;font-size:8.8px;line-height:8.8px;color:#fafafa;transform:scaleX(0.874);-webkit-text-stroke:0.25px #fafafa">19 Aug 2025</div>
<div class="a t" style="left:55.4px;top:423.9px;font-size:8.8px;line-height:8.8px;color:#fafafa;transform:scaleX(0.833);-webkit-text-stroke:0.25px #fafafa">19 Aug 18:05</div>
<div class="a t" style="left:106.4px;top:423.9px;font-size:8.8px;line-height:8.8px;color:#fafafa;transform:scaleX(0.833);-webkit-text-stroke:0.25px #fafafa">19 Aug 18:25</div>
<div class="a t" style="left:157.4px;top:423.9px;font-size:8.8px;line-height:8.8px;color:#fafafa;transform:scaleX(0.833);-webkit-text-stroke:0.25px #fafafa">19 Aug 18:45</div>
<div class="a t" style="left:208.4px;top:423.9px;font-size:8.8px;line-height:8.8px;color:#fafafa;transform:scaleX(0.833);-webkit-text-stroke:0.25px #fafafa">19 Aug 19:05</div>
<div class="a t" style="left:259.4px;top:423.9px;font-size:8.8px;line-height:8.8px;color:#fafafa;transform:scaleX(0.833);-webkit-text-stroke:0.25px #fafafa">19 Aug 19:25</div>
<div class="a t" style="left:310.4px;top:423.9px;font-size:8.8px;line-height:8.8px;color:#fafafa;transform:scaleX(0.833);-webkit-text-stroke:0.25px #fafafa">19 Aug 19:45</div>
<div class="a t" style="left:361.4px;top:423.9px;font-size:8.8px;line-height:8.8px;color:#fafafa;transform:scaleX(0.833);-webkit-text-stroke:0.25px #fafafa">19 Aug 20:05</div>
<div class="a t" style="left:412.4px;top:423.9px;font-size:8.8px;line-height:8.8px;color:#fafafa;transform:scaleX(0.833);-webkit-text-stroke:0.25px #fafafa">19 Aug 20:25</div>
<div class="a t" style="left:463.4px;top:423.9px;font-size:8.8px;line-height:8.8px;color:#fafafa;transform:scaleX(0.833);-webkit-text-stroke:0.25px #fafafa">19 Aug 20:45</div>
<div class="a t" style="left:514.4px;top:423.9px;font-size:8.8px;line-height:8.8px;color:#fafafa;transform:scaleX(0.833);-webkit-text-stroke:0.25px #fafafa">19 Aug 21:05</div>
<div class="a t" style="left:565.4px;top:423.9px;font-size:8.8px;line-height:8.8px;color:#fafafa;transform:scaleX(0.833);-webkit-text-stroke:0.25px #fafafa">19 Aug 21:25</div>
<div class="a t" style="left:616.4px;top:423.9px;font-size:8.8px;line-height:8.8px;color:#fafafa;transform:scaleX(0.833);-webkit-text-stroke:0.25px #fafafa">19 Aug 21:45</div>
<div class="a t" style="left:667.4px;top:423.9px;font-size:8.8px;line-height:8.8px;color:#fafafa;transform:scaleX(0.833);-webkit-text-stroke:0.25px #fafafa">19 Aug 22:05</div>
<div class="a t" style="left:718.4px;top:423.9px;font-size:8.8px;line-height:8.8px;color:#fafafa;transform:scaleX(0.833);-webkit-text-stroke:0.25px #fafafa">19 Aug 22:25</div>
<div class="a t" style="left:769.4px;top:423.9px;font-size:8.8px;line-height:8.8px;color:#fafafa;transform:scaleX(0.833);-webkit-text-stroke:0.25px #fafafa">19 Aug 22:45</div>
<div class="a t" style="left:820.4px;top:423.9px;font-size:8.8px;line-height:8.8px;color:#fafafa;transform:scaleX(0.833);-webkit-text-stroke:0.25px #fafafa">19 Aug 23:05</div>
<div class="a t" style="left:871.4px;top:423.9px;font-size:8.8px;line-height:8.8px;color:#fafafa;transform:scaleX(0.833);-webkit-text-stroke:0.25px #fafafa">19 Aug 23:25</div>
<div class="a t" style="left:922.4px;top:423.9px;font-size:8.8px;line-height:8.8px;color:#fafafa;transform:scaleX(0.833);-webkit-text-stroke:0.25px #fafafa">19 Aug 23:45</div>
<div class="a t" style="left:17.6px;top:446.9px;font-size:9.5px;line-height:9.5px;color:#000;transform:scaleX(0.930);-webkit-text-stroke:0.2px #000">注文番号</div>
<div class="a t" style="left:226.8px;top:446.9px;font-size:9.5px;line-height:9.5px;color:#000;transform:scaleX(0.895);-webkit-text-stroke:0.2px #000">時間</div>
<div class="a t" style="left:276.6px;top:446.9px;font-size:9.5px;line-height:9.5px;color:#000;transform:scaleX(0.912);-webkit-text-stroke:0.2px #000">取引種別</div>
<div class="a t" style="left:348.8px;top:446.9px;font-size:9.5px;line-height:9.5px;color:#000;transform:scaleX(0.905);-webkit-text-stroke:0.2px #000">数量</div>
<div class="a t" style="left:401.8px;top:446.9px;font-size:9.5px;line-height:9.5px;color:#000;transform:scaleX(0.870);-webkit-text-stroke:0.2px #000">通貨ペア</div>
<div class="a t" style="left:494.0px;top:446.9px;font-size:9.5px;line-height:9.5px;color:#000;transform:scaleX(0.890);-webkit-text-stroke:0.2px #000">価格</div>
<div class="a t" style="left:522.0px;top:446.9px;font-size:9.5px;line-height:9.5px;color:#000;transform:scaleX(0.952);-webkit-text-stroke:0.2px #000">決済逆指値(S/...</div>
<div class="a t" style="left:606.1px;top:446.9px;font-size:9.5px;line-height:9.5px;color:#000;transform:scaleX(0.964);-webkit-text-stroke:0.2px #000">決済指値(T/P)</div>
<div class="a t" style="left:723.6px;top:446.9px;font-size:9.5px;line-height:9.5px;color:#000;transform:scaleX(0.885);-webkit-text-stroke:0.2px #000">価格</div>
<div class="a t" style="left:790.2px;top:446.9px;font-size:9.5px;line-height:9.5px;color:#000;transform:scaleX(0.910);-webkit-text-stroke:0.2px #000">手数料</div>
<div class="a t" style="left:867.1px;top:446.9px;font-size:9.5px;line-height:9.5px;color:#000;transform:scaleX(0.682);-webkit-text-stroke:0.2px #000">スワップ</div>
<div class="a t" style="left:997.0px;top:446.9px;font-size:9.5px;line-height:9.5px;color:#000;transform:scaleX(0.940);-webkit-text-stroke:0.2px #000">損益</div>
<div class="a t" style="left:64.5px;top:448.1px;font-size:8px;line-height:8px;color:#666;transform:scaleX(1.566)">/</div>
<div class="a t" style="left:30.5px;top:464.1px;font-size:9.5px;line-height:9.5px;color:#111;transform:scaleX(0.908);font-weight:bold">残高: 171 727 JPY&nbsp; 有効証拠金: 171 727&nbsp; 余剰証拠金: 171 727</div>
<div class="a t" style="left:1012.0px;top:463.9px;font-size:10px;line-height:10px;color:#111;transform:scaleX(0.719)">0</div>
<div class="a t" style="left:23.2px;top:541.8px;font-size:10.5px;line-height:10.5px;color:#111;transform:scaleX(0.786)">取引</div>
<div class="a t" style="left:57.4px;top:541.8px;font-size:10.5px;line-height:10.5px;color:#686868;transform:scaleX(0.861)">運用比率</div>
<div class="a t" style="left:112.9px;top:541.8px;font-size:10.5px;line-height:10.5px;color:#686868;transform:scaleX(0.830)">口座履歴</div>
<div class="a t" style="left:166.0px;top:541.8px;font-size:10.5px;line-height:10.5px;color:#686868;transform:scaleX(0.605)">ニュース</div>
<div class="a t" style="left:208.5px;top:541.8px;font-size:10.5px;line-height:10.5px;color:#686868;transform:scaleX(0.698)">アラーム設定</div>
<div class="a t" style="left:270.6px;top:541.8px;font-size:10.5px;line-height:10.5px;color:#686868;transform:scaleX(0.647)">メールボックス</div>
<div class="a t" style="left:344.4px;top:541.8px;font-size:10.5px;line-height:10.5px;color:#686868;transform:scaleX(0.596)">マーケット</div>
<div class="a t" style="left:405.9px;top:541.8px;font-size:10.5px;line-height:10.5px;color:#686868;transform:scaleX(0.684)">シグナル</div>
<div class="a t" style="left:453.0px;top:541.8px;font-size:10.5px;line-height:10.5px;color:#686868;transform:scaleX(0.855)">記事</div>
<div class="a t" style="left:487.2px;top:541.8px;font-size:10.5px;line-height:10.5px;color:#686868;transform:scaleX(0.622)">ライブラリ</div>
<div class="a t" style="left:536.8px;top:541.8px;font-size:10.5px;line-height:10.5px;color:#686868;transform:scaleX(0.636)">エキスパート</div>
<div class="a t" style="left:595.9px;top:541.8px;font-size:10.5px;line-height:10.5px;color:#686868;transform:scaleX(0.855)">操作履歴</div>
<div class="a t" style="left:103.3px;top:541.5px;font-size:11px;line-height:11px;color:#606060;transform:scaleX(0.420);-webkit-text-stroke:0.25px #606060">|</div>
<div class="a t" style="left:157.1px;top:541.5px;font-size:11px;line-height:11px;color:#606060;transform:scaleX(0.420);-webkit-text-stroke:0.25px #606060">|</div>
<div class="a t" style="left:200.9px;top:541.5px;font-size:11px;line-height:11px;color:#606060;transform:scaleX(0.420);-webkit-text-stroke:0.25px #606060">|</div>
<div class="a t" style="left:262.7px;top:541.5px;font-size:11px;line-height:11px;color:#606060;transform:scaleX(0.420);-webkit-text-stroke:0.25px #606060">|</div>
<div class="a t" style="left:335.4px;top:541.5px;font-size:11px;line-height:11px;color:#606060;transform:scaleX(0.420);-webkit-text-stroke:0.25px #606060">|</div>
<div class="a t" style="left:397.8px;top:541.5px;font-size:11px;line-height:11px;color:#606060;transform:scaleX(0.420);-webkit-text-stroke:0.25px #606060">|</div>
<div class="a t" style="left:443.9px;top:541.5px;font-size:11px;line-height:11px;color:#606060;transform:scaleX(0.420);-webkit-text-stroke:0.25px #606060">|</div>
<div class="a t" style="left:479.8px;top:541.5px;font-size:11px;line-height:11px;color:#606060;transform:scaleX(0.420);-webkit-text-stroke:0.25px #606060">|</div>
<div class="a t" style="left:529.4px;top:541.5px;font-size:11px;line-height:11px;color:#606060;transform:scaleX(0.420);-webkit-text-stroke:0.25px #606060">|</div>
<div class="a t" style="left:586.4px;top:541.5px;font-size:11px;line-height:11px;color:#606060;transform:scaleX(0.420);-webkit-text-stroke:0.25px #606060">|</div>
<div class="a t" style="left:641.1px;top:541.5px;font-size:11px;line-height:11px;color:#606060;transform:scaleX(0.420);-webkit-text-stroke:0.25px #606060">|</div>
<div class="a t" style="left:321.4px;top:547.1px;font-size:7.5px;line-height:7.5px;color:#e81818;transform:scaleX(0.936);-webkit-text-stroke:0.2px #e81818">11</div>
<div class="a t" style="left:379.6px;top:547.1px;font-size:7.5px;line-height:7.5px;color:#e81818;transform:scaleX(0.895);-webkit-text-stroke:0.2px #e81818">105</div>
<div class="a t" style="left:2.0px;top:564.7px;font-size:10.5px;line-height:10.5px;color:#000;transform:scaleX(0.708);-webkit-text-stroke:0.2px #000">F1キーでヘルプが表示されます</div>
<div class="a t" style="left:462.6px;top:564.9px;font-size:10px;line-height:10px;color:#000;transform:scaleX(0.937)">Default</div>
<div class="a t" style="left:932.7px;top:564.9px;font-size:10px;line-height:10px;color:#000;transform:scaleX(0.888)">47650/71 kb</div>
</body></html>
